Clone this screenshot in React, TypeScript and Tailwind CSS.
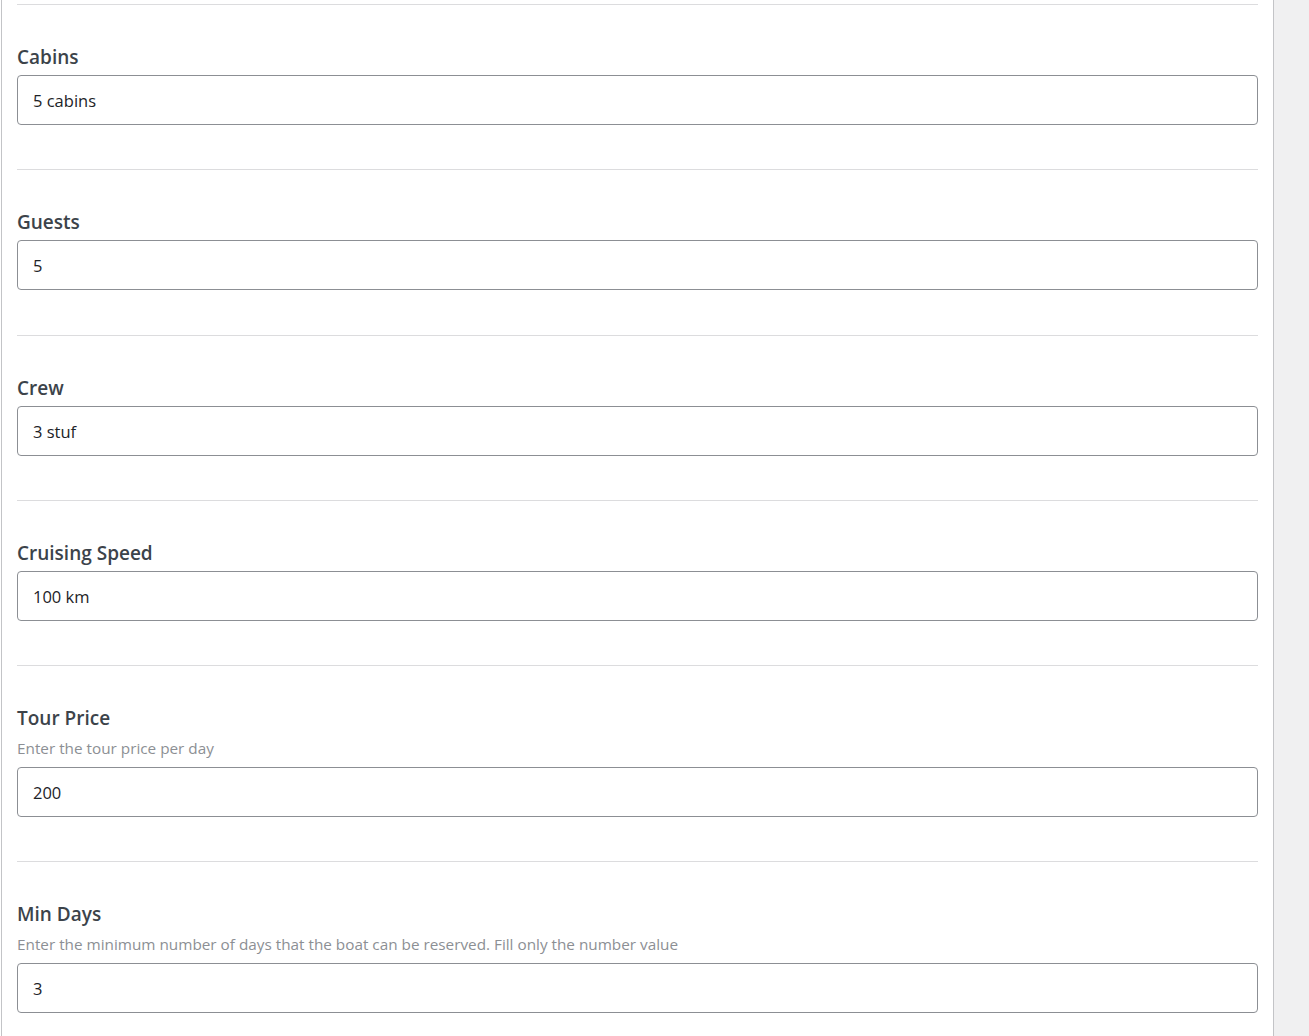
const fields = [
  { label: 'Cabins', value: '5 cabins' },
  { label: 'Guests', value: '5' },
  { label: 'Crew', value: '3 stuf' },
  { label: 'Cruising Speed', value: '100 km' },
  { label: 'Tour Price', value: '200', hint: 'Enter the tour price per day' },
  {
    label: 'Min Days',
    value: '3',
    hint: 'Enter the minimum number of days that the boat can be reserved. Fill only the number value',
  },
];

export default function App() {
  return (
    <div className="min-h-screen flex bg-white font-['Open_Sans',sans-serif]">
      <div className="ml-px w-[1273px] border-x border-[#c3c4c7] bg-white px-[15px] pt-1">
        {fields.map((f) => (
          <div key={f.label} className="border-t border-[#dcdcde] pt-10 pb-[44.25px]">
            <div className="text-[19px] leading-6 font-semibold text-[#3c434a] mb-1.5">{f.label}</div>
            {f.hint && (
              <div className="text-[15.3px] leading-6 text-[#8c8f94] mb-[7px]">{f.hint}</div>
            )}
            <input
              readOnly
              value={f.value}
              className="w-full h-[50px] rounded border border-[#8c8f94] bg-white px-[15px] pt-px text-[16.5px] text-[#1d2327] outline-none"
            />
          </div>
        ))}
      </div>
      <div className="flex-1 bg-[#f0f0f1]" />
    </div>
  );
}
